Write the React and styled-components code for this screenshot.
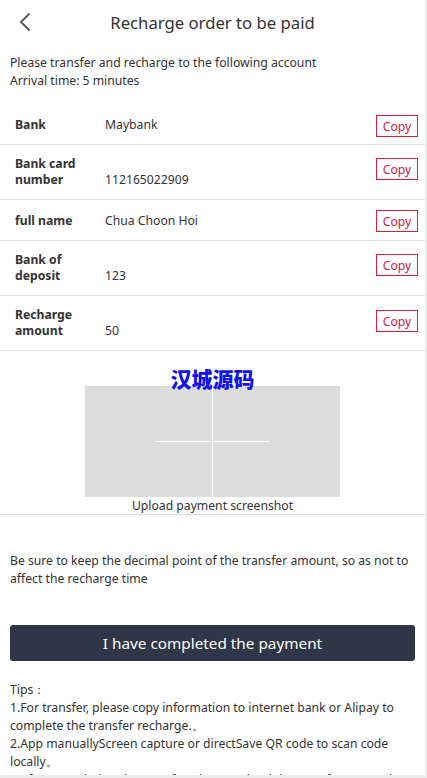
import React from "react";
import styled, { createGlobalStyle } from "styled-components";

const Global = createGlobalStyle`
  html, body { margin: 0; padding: 0; background: #ececec; }
  body { font-family: "Noto Sans", "Open Sans", Arial, sans-serif; color: #333; }
  * { box-sizing: border-box; }
`;

const Page = styled.div`
  width: 425px;
  height: 775px;
  overflow: hidden;
  background: #fff;
`;

const Header = styled.div`
  height: 44px;
  display: flex;
  align-items: center;
  justify-content: center;
  position: relative;
`;

const Back = styled.button`
  position: absolute;
  left: 14px;
  top: 10px;
  width: 22px;
  height: 24px;
  border: 0;
  background: none;
  padding: 0;
  display: flex;
  align-items: center;
  justify-content: center;
`;

const Title = styled.h1`
  margin: 0;
  font-size: 16.7px;
  font-weight: 400;
  color: #333;
`;

const Intro = styled.div`
  padding: 10px 10px 14px;
  font-size: 12.2px;
  line-height: 18px;
`;

const Row = styled.div`
  display: flex;
  align-items: flex-end;
  min-height: 41px;
  padding: 11px 7px 11px 15px;
  border-bottom: 1px solid #ddd;
  font-size: 12.2px;
  line-height: 16px;
`;

const Label = styled.div`
  width: 90px;
  padding-right: 10px;
  font-weight: 700;
  flex: none;
`;

const Value = styled.div`
  flex: 1;
`;

const CopyBtn = styled.button`
  align-self: center;
  width: 42px;
  height: 22px;
  border: 1px solid #d8203c;
  background: #fff;
  color: #d8203c;
  font-family: inherit;
  font-size: 12.2px;
  padding: 0;
  margin-top: ${(p) => (p.$shift || 0) * 2 - 6}px;
  margin-bottom: -6px;
`;

const Upload = styled.div`
  position: relative;
  padding-top: 35px;
  display: flex;
  flex-direction: column;
  align-items: center;
  border-bottom: 1px solid #ddd;
`;

const Watermark = styled.div`
  position: absolute;
  top: 16px;
  left: 0;
  right: 0;
  text-align: center;
  font-family: "Noto Sans CJK SC", sans-serif;
  font-weight: 900;
  font-size: 21px;
  line-height: 22px;
  color: #1010f0;
  z-index: 1;
`;

const Box = styled.div`
  width: 255px;
  height: 111px;
  background: #dddddd;
  position: relative;
  &::before {
    content: "";
    position: absolute;
    left: 127px;
    top: 0;
    bottom: 0;
    width: 1px;
    background: #fff;
  }
  &::after {
    content: "";
    position: absolute;
    left: 71px;
    width: 113px;
    top: 55px;
    height: 1px;
    background: #fff;
  }
`;

const Caption = styled.div`
  font-size: 12.2px;
  line-height: 16px;
  margin-top: 1px;
`;

const Note = styled.p`
  margin: 37px 10px 0;
  font-size: 12.2px;
  line-height: 18px;
`;

const Submit = styled.button`
  display: block;
  margin: 37px 10px 0;
  width: 405px;
  height: 36px;
  border: 0;
  border-radius: 3px;
  background: #2e3648;
  color: #fff;
  font-family: inherit;
  font-size: 15.3px;
`;

const Tips = styled.div`
  margin: 20px 10px 0;
  font-size: 12.2px;
  line-height: 18px;
`;

const rows = [
  { label: "Bank", value: "Maybank", shift: 2 },
  { label: "Bank card number", value: "112165022909", shift: -3 },
  { label: "full name", value: "Chua Choon Hoi", shift: 1 },
  { label: "Bank of deposit", value: "123", shift: -3 },
  { label: "Recharge amount", value: "50", shift: -2 },
];

export default function App() {
  return (
    <>
      <Global />
      <Page>
        <Header>
          <Back aria-label="back">
            <svg width="14" height="20" viewBox="0 0 14 20">
              <path d="M11.5 1.5 L3 10 L11.5 18.5" fill="none" stroke="#555" strokeWidth="1.8" />
            </svg>
          </Back>
          <Title>Recharge order to be paid</Title>
        </Header>
        <Intro>
          Please transfer and recharge to the following account
          <br />
          Arrival time: 5 minutes
        </Intro>
        {rows.map((r) => (
          <Row key={r.label}>
            <Label>{r.label}</Label>
            <Value>{r.value}</Value>
            <CopyBtn $shift={r.shift}>Copy</CopyBtn>
          </Row>
        ))}
        <Upload>
          <Watermark>汉城源码</Watermark>
          <Box />
          <Caption>Upload payment screenshot</Caption>
        </Upload>
        <Note>
          Be sure to keep the decimal point of the transfer amount, so as not to affect the recharge time
        </Note>
        <Submit>I have completed the payment</Submit>
        <Tips>
          Tips：
          <br />
          1.For transfer, please copy information to internet bank or Alipay to complete the transfer recharge.。
          <br />
          2.App manuallyScreen capture or directSave QR code to scan code locally。
          <br />
          3.After completing the transfer, please upload the transfer screenshot and wait for the review.
        </Tips>
      </Page>
    </>
  );
}
